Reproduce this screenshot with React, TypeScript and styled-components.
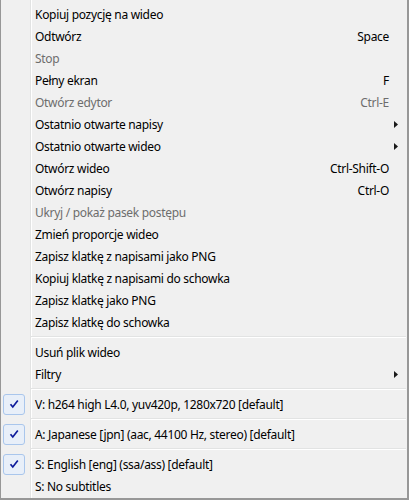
import styled, { createGlobalStyle } from "styled-components";

const GlobalStyle = createGlobalStyle`
  html, body {
    margin: 0;
    padding: 0;
    background: #ffffff;
  }
`;

type Entry =
  | { kind: "sep" }
  | {
      kind: "item";
      label: string;
      shortcut?: string;
      disabled?: boolean;
      submenu?: boolean;
      checked?: boolean;
    };

const entries: Entry[] = [
  { kind: "item", label: "Kopiuj pozycję na wideo" },
  { kind: "item", label: "Odtwórz", shortcut: "Space" },
  { kind: "item", label: "Stop", disabled: true },
  { kind: "item", label: "Pełny ekran", shortcut: "F" },
  { kind: "item", label: "Otwórz edytor", shortcut: "Ctrl-E", disabled: true },
  { kind: "item", label: "Ostatnio otwarte napisy", submenu: true },
  { kind: "item", label: "Ostatnio otwarte wideo", submenu: true },
  { kind: "item", label: "Otwórz wideo", shortcut: "Ctrl-Shift-O" },
  { kind: "item", label: "Otwórz napisy", shortcut: "Ctrl-O" },
  { kind: "item", label: "Ukryj / pokaż pasek postępu", disabled: true },
  { kind: "item", label: "Zmień proporcje wideo" },
  { kind: "item", label: "Zapisz klatkę z napisami jako PNG" },
  { kind: "item", label: "Kopiuj klatkę z napisami do schowka" },
  { kind: "item", label: "Zapisz klatkę jako PNG" },
  { kind: "item", label: "Zapisz klatkę do schowka" },
  { kind: "sep" },
  { kind: "item", label: "Usuń plik wideo" },
  { kind: "item", label: "Filtry", submenu: true },
  { kind: "sep" },
  { kind: "item", label: "V: h264 high L4.0, yuv420p, 1280x720 [default]", checked: true },
  { kind: "sep" },
  { kind: "item", label: "A: Japanese [jpn] (aac, 44100 Hz, stereo) [default]", checked: true },
  { kind: "sep" },
  { kind: "item", label: "S: English [eng] (ssa/ass) [default]", checked: true },
  { kind: "item", label: "S: No subtitles" },
];

export default function App() {
  return (
    <>
      <GlobalStyle />
      <Menu>
        {entries.map((e, i) =>
          e.kind === "sep" ? (
            <Separator key={i} />
          ) : (
            <Item key={i} $disabled={e.disabled}>
              <Gutter>
                {e.checked && (
                  <CheckBox>
                    <svg width="12" height="10" viewBox="0 0 12 10">
                      <path
                        d="M2.5 5.2 L4.8 8 L9.8 1.6"
                        fill="none"
                        stroke="#0d1a9a"
                        strokeWidth="1.7"
                      />
                    </svg>
                  </CheckBox>
                )}
              </Gutter>
              <Label>{e.label}</Label>
              <Shortcut>{e.shortcut}</Shortcut>
              <Arrow>
                {e.submenu && (
                  <svg width="4" height="7" viewBox="0 0 4 7">
                    <path d="M0 0 L4 3.5 L0 7 Z" fill="#1a1a1a" />
                  </svg>
                )}
              </Arrow>
            </Item>
          )
        )}
      </Menu>
    </>
  );
}

const Menu = styled.div`
  box-sizing: border-box;
  width: 409px;
  height: 500px;
  padding: 3px 1px 1px 0;
  border-left: 1px solid #979797;
  border-right: 2px solid #979797;
  border-bottom: 2px solid #979797;
  background: linear-gradient(
    to right,
    #f0f0f0 29px,
    #e2e3e3 29px,
    #e2e3e3 30px,
    #ffffff 30px,
    #ffffff 31px,
    #f0f0f0 31px
  );
  font-family: "Segoe UI", "Noto Sans", sans-serif;
  font-size: 12px;
  letter-spacing: -0.3px;
  color: #000;
  display: flex;
  flex-direction: column;
`;

const Item = styled.div<{ $disabled?: boolean }>`
  height: 22px;
  display: flex;
  align-items: center;
  color: ${(p) => (p.$disabled ? "#6d6d6d" : "#000")};
  white-space: nowrap;
`;

const Gutter = styled.div`
  width: 34px;
  height: 22px;
  flex: none;
  display: flex;
  align-items: center;
  padding-left: 2px;
  box-sizing: border-box;
`;

const CheckBox = styled.div`
  box-sizing: border-box;
  width: 22px;
  height: 21px;
  border: 1px solid #a9c6ec;
  border-radius: 3px;
  background: #e8eff9;
  display: flex;
  align-items: center;
  justify-content: center;
`;

const Label = styled.span`
  flex: 1;
`;

const Shortcut = styled.span`
  flex: none;
`;

const Arrow = styled.div`
  width: 17px;
  flex: none;
  display: flex;
  align-items: center;
  padding-left: 5px;
  box-sizing: border-box;
`;

const Separator = styled.div`
  height: 8px;
  flex: none;
  margin-left: 30px;
  background: linear-gradient(
    to bottom,
    transparent 3px,
    #e2e3e3 3px,
    #e2e3e3 4px,
    #ffffff 4px,
    #ffffff 5px,
    transparent 5px
  );
`;
